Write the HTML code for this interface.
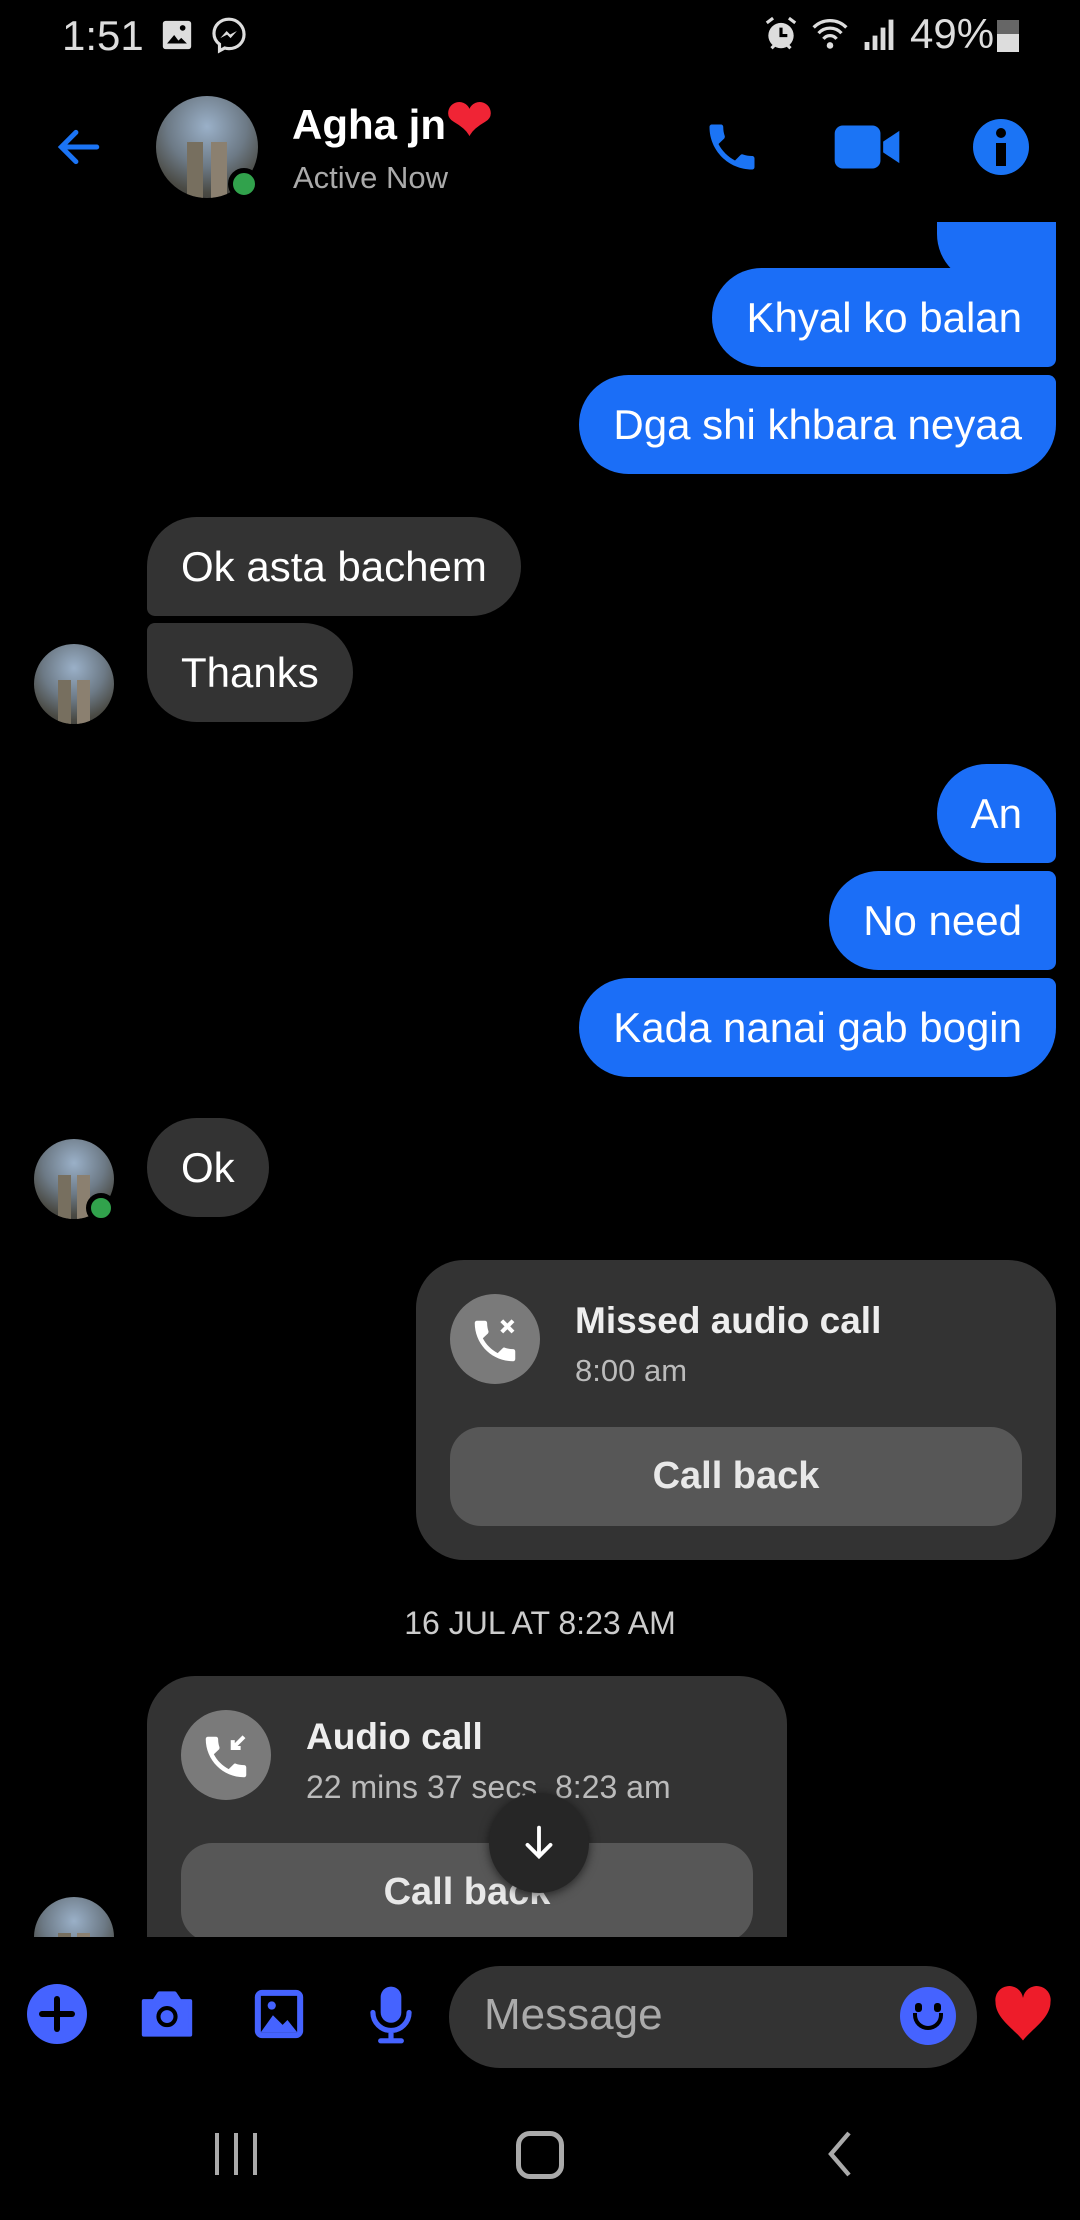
<!DOCTYPE html>
<html><head><meta charset="utf-8"><style>
*{margin:0;padding:0;box-sizing:border-box}
body{width:1080px;height:2220px;background:#000;font-family:"Liberation Sans",sans-serif;color:#fff;position:relative;overflow:hidden}
.a{position:absolute}
.b{position:absolute;height:99px;font-size:42px;line-height:99px;padding:0 34px;white-space:nowrap;letter-spacing:0px}
.me{background:#1b6ef7;right:24px}
.th{background:#333;left:147px}
.av{position:absolute;border-radius:50%;background:radial-gradient(circle at 50% 30%,#9ab0c8 0,#6d7a86 45%,#4a4a44 75%,#333 100%);overflow:hidden}
.av:after{content:"";position:absolute;left:30%;top:45%;width:40%;height:55%;background:linear-gradient(90deg,#776f5f 0 40%,transparent 40% 60%,#8b8070 60%)}
.card{position:absolute;background:#333;border-radius:48px}
.btn{position:absolute;background:#575757;border-radius:31px;text-align:center;font-size:38px;font-weight:bold;color:#e8e8e8}
.ic{position:absolute;width:90px;height:90px;border-radius:50%;background:#7a7a7a}
</style></head><body>
<!-- status bar -->
<div class="a" style="left:62px;top:12px;font-size:42px;color:#ddd">1:51</div>
<svg class="a" style="left:160px;top:18px" width="34" height="34" viewBox="0 0 24 24"><rect x="2" y="2" width="20" height="20" rx="2" fill="#ddd"/><path d="M5 18l5-6 3 4 2-2 4 4z" fill="#000"/><circle cx="16" cy="7" r="2" fill="#000"/></svg>
<svg class="a" style="left:210px;top:16px" width="38" height="38" viewBox="0 0 24 24"><path d="M12 2C6.5 2 2.5 6 2.5 11c0 2.8 1.3 5.2 3.5 6.8V22l3.3-1.8c.9.3 1.8.4 2.7.4 5.5 0 9.5-4 9.5-9S17.5 2 12 2z" fill="none" stroke="#ddd" stroke-width="2"/><path d="M6.5 14l4-4.5 2.2 2.2 4.3-2.2-4 4.5-2.2-2.2z" fill="#ddd"/></svg>
<svg class="a" style="left:762px;top:14px" width="38" height="40" viewBox="0 0 24 24"><circle cx="12" cy="13" r="8" fill="#ddd"/><path d="M12 8v5h4" stroke="#000" stroke-width="2" fill="none"/><path d="M3 5l4-3M21 5l-4-3M6 21l2-2M18 21l-2-2" stroke="#ddd" stroke-width="2"/></svg>
<svg class="a" style="left:810px;top:16px" width="40" height="36" viewBox="0 0 24 22"><path d="M2 7a14 14 0 0 1 20 0M5 10.5a9.5 9.5 0 0 1 14 0M8 14a5 5 0 0 1 8 0" fill="none" stroke="#ddd" stroke-width="2"/><circle cx="12" cy="18" r="2" fill="#ddd"/></svg>
<svg class="a" style="left:862px;top:18px" width="34" height="32" viewBox="0 0 20 20"><rect x="1" y="15" width="3" height="5" fill="#ddd"/><rect x="6" y="11" width="3" height="9" fill="#ddd"/><rect x="11" y="6" width="3" height="14" fill="#ddd"/><rect x="16" y="1" width="3" height="19" fill="#ddd"/></svg>
<div class="a" style="left:910px;top:10px;font-size:42px;color:#ddd">49%</div>
<div class="a" style="left:997px;top:20px;width:22px;height:32px;background:#ddd;border-top:14px solid #666"></div>

<!-- header -->
<svg class="a" style="left:50px;top:122px" width="56" height="50" viewBox="0 0 24 24"><path d="M21 12H4M11 5l-7 7 7 7" fill="none" stroke="#1b74f5" stroke-width="2.4" stroke-linecap="round"/></svg>
<div class="av" style="left:156px;top:96px;width:102px;height:102px"></div>
<div class="a" style="left:228px;top:168px;width:32px;height:32px;border-radius:50%;background:#31a24c;border:5px solid #000"></div>
<div class="a" style="left:292px;top:100px;font-size:42px;font-weight:bold">Agha jn<span style="color:#f02435;font-size:56px;line-height:40px">❤</span></div>
<div class="a" style="left:293px;top:160px;font-size:31px;color:#aaa">Active Now</div>
<svg class="a" style="left:702px;top:117px" width="60" height="60" viewBox="0 0 24 24"><path d="M6.6 10.8c1.4 2.8 3.8 5.1 6.6 6.6l2.2-2.2c.3-.3.7-.4 1-.2 1.1.4 2.3.6 3.6.6.6 0 1 .4 1 1V20c0 .6-.4 1-1 1C10.6 21 3 13.4 3 4c0-.6.4-1 1-1h3.5c.6 0 1 .4 1 1 0 1.3.2 2.5.6 3.6.1.3 0 .7-.2 1z" fill="#1b74f5"/></svg>
<svg class="a" style="left:832px;top:120px" width="70" height="54" viewBox="0 0 26 20"><rect x="1" y="2" width="17" height="16" rx="3" fill="#1b74f5"/><path d="M19 8l6-4v12l-6-4z" fill="#1b74f5"/></svg>
<div class="a" style="left:973px;top:119px;width:56px;height:56px;border-radius:50%;background:#1b74f5"></div>
<div class="a" style="left:996px;top:128px;width:10px;height:10px;border-radius:50%;background:#000"></div>
<div class="a" style="left:996px;top:143px;width:10px;height:23px;background:#000"></div>

<!-- messages -->
<div class="a" style="left:0;top:0;width:1080px;height:1937px;overflow:hidden">
<div class="a" style="left:0;top:222px;width:1080px;height:1715px;overflow:hidden">
<div class="b me" style="top:-60px;width:119px;height:122px;border-radius:0 0 8px 50px"></div>
</div>
<div class="b me" style="top:268px;border-radius:50px 8px 8px 50px">Khyal ko balan</div>
<div class="b me" style="top:375px;border-radius:50px 8px 50px 50px">Dga shi khbara neyaa</div>
<div class="b th" style="top:517px;border-radius:50px 50px 50px 8px">Ok asta bachem</div>
<div class="b th" style="top:623px;border-radius:8px 50px 50px 50px">Thanks</div>
<div class="av" style="left:34px;top:644px;width:80px;height:80px"></div>
<div class="b me" style="top:764px;border-radius:50px 50px 8px 50px">An</div>
<div class="b me" style="top:871px;border-radius:50px 8px 8px 50px">No need</div>
<div class="b me" style="top:978px;border-radius:50px 8px 50px 50px">Kada nanai gab bogin</div>
<div class="b th" style="top:1118px;border-radius:50px">Ok</div>
<div class="av" style="left:34px;top:1139px;width:80px;height:80px"></div>
<div class="a" style="left:86px;top:1193px;width:30px;height:30px;border-radius:50%;background:#31a24c;border:5px solid #000"></div>

<div class="card" style="left:416px;top:1260px;width:640px;height:300px"></div>
<div class="ic" style="left:450px;top:1294px"></div>
<svg class="a" style="left:468px;top:1314px" width="54" height="54" viewBox="0 0 24 24"><path d="M6.6 10.8c1.4 2.8 3.8 5.1 6.6 6.6l2.2-2.2c.3-.3.7-.4 1-.2 1.1.4 2.3.6 3.6.6.6 0 1 .4 1 1V20c0 .6-.4 1-1 1C10.6 21 3 13.4 3 4c0-.6.4-1 1-1h3.5c.6 0 1 .4 1 1 0 1.3.2 2.5.6 3.6.1.3 0 .7-.2 1z" fill="#fff"/><path d="M15 3l5 5M20 3l-5 5" stroke="#fff" stroke-width="1.8"/></svg>
<div class="a" style="left:575px;top:1300px;font-size:37px;font-weight:bold;color:#eee">Missed audio call</div>
<div class="a" style="left:575px;top:1353px;font-size:31px;color:#bbb">8:00 am</div>
<div class="btn" style="left:450px;top:1427px;width:572px;height:99px;line-height:99px">Call back</div>

<div class="a" style="left:0;top:1605px;width:1080px;text-align:center;font-size:32px;color:#ccc">16 JUL AT 8:23 AM</div>

<div class="card" style="left:147px;top:1676px;width:640px;height:320px"></div>
<div class="ic" style="left:181px;top:1710px"></div>
<svg class="a" style="left:199px;top:1730px" width="54" height="54" viewBox="0 0 24 24"><path d="M6.6 10.8c1.4 2.8 3.8 5.1 6.6 6.6l2.2-2.2c.3-.3.7-.4 1-.2 1.1.4 2.3.6 3.6.6.6 0 1 .4 1 1V20c0 .6-.4 1-1 1C10.6 21 3 13.4 3 4c0-.6.4-1 1-1h3.5c.6 0 1 .4 1 1 0 1.3.2 2.5.6 3.6.1.3 0 .7-.2 1z" fill="#fff"/><path d="M20 3l-5 5M15 4.5V8h3.5" stroke="#fff" stroke-width="1.8" fill="none"/></svg>
<div class="a" style="left:306px;top:1716px;font-size:37px;font-weight:bold;color:#eee">Audio call</div>
<div class="a" style="left:306px;top:1769px;font-size:32px;color:#bbb">22 mins 37 secs, 8:23 am</div>
<div class="btn" style="left:181px;top:1843px;width:572px;height:99px;line-height:99px">Call back</div>
<div class="av" style="left:34px;top:1897px;width:80px;height:80px"></div>
<div class="a" style="left:489px;top:1793px;width:100px;height:100px;border-radius:50%;background:#262626;box-shadow:0 2px 10px rgba(0,0,0,.6)"></div>
<svg class="a" style="left:516px;top:1820px" width="46" height="46" viewBox="0 0 24 24"><path d="M12 4v15M6 13l6 6 6-6" fill="none" stroke="#fff" stroke-width="2" stroke-linecap="round"/></svg>
</div>

<!-- bottom bar -->
<div class="a" style="left:27px;top:1984px;width:60px;height:60px;border-radius:50%;background:#4563ff"></div>
<div class="a" style="left:54px;top:1996px;width:6px;height:36px;background:#000;border-radius:3px"></div>
<div class="a" style="left:39px;top:2011px;width:36px;height:6px;background:#000;border-radius:3px"></div>
<svg class="a" style="left:136px;top:1983px" width="62" height="62" viewBox="0 0 24 24"><path d="M3 7h4l2-3h6l2 3h4v13H3z" fill="#4563ff" stroke="#4563ff" stroke-width="1.5" stroke-linejoin="round"/><circle cx="12" cy="13" r="3.3" fill="none" stroke="#000" stroke-width="1.6"/></svg>
<svg class="a" style="left:250px;top:1985px" width="58" height="58" viewBox="0 0 24 24"><rect x="2" y="2" width="20" height="20" rx="3" fill="#4563ff"/><rect x="4.5" y="4.5" width="15" height="15" fill="#000"/><path d="M4.5 19.5l5-7 4 4 2-2 4 5z" fill="#4563ff"/><circle cx="9" cy="8.5" r="1.7" fill="#4563ff"/></svg>
<svg class="a" style="left:365px;top:1984px" width="52" height="62" viewBox="0 0 20 24"><rect x="6" y="1" width="8" height="14" rx="4" fill="#4563ff"/><path d="M3 11a7 7 0 0 0 14 0M10 18v4M6 22h8" fill="none" stroke="#4563ff" stroke-width="2" stroke-linecap="round"/></svg>
<div class="a" style="left:449px;top:1966px;width:528px;height:102px;border-radius:51px;background:#333"></div>
<div class="a" style="left:484px;top:1990px;font-size:44px;color:#aaa">Message</div>
<div class="a" style="left:900px;top:1987px;width:56px;height:58px;border-radius:50%;background:#4563ff"></div>
<div class="a" style="left:915px;top:2003px;width:7px;height:9px;border-radius:3px;background:#000"></div>
<div class="a" style="left:934px;top:2003px;width:7px;height:9px;border-radius:3px;background:#000"></div>
<div class="a" style="left:913px;top:2013px;width:30px;height:17px;border:4px solid #000;border-top:none;border-radius:0 0 15px 15px"></div>
<svg class="a" style="left:990px;top:1980px" width="66" height="66" viewBox="0 0 24 24"><path d="M12 22C9 18 2 14 2 8a5 5 0 0 1 10-1.5A5 5 0 0 1 22 8c0 6-7 10-10 14z" fill="#ee1c2a"/></svg>

<!-- nav -->
<div class="a" style="left:215px;top:2133px;width:4px;height:42px;background:#aaa"></div>
<div class="a" style="left:234px;top:2133px;width:4px;height:42px;background:#aaa"></div>
<div class="a" style="left:253px;top:2133px;width:4px;height:42px;background:#aaa"></div>
<div class="a" style="left:516px;top:2131px;width:48px;height:48px;border:5px solid #aaa;border-radius:14px"></div>
<svg class="a" style="left:825px;top:2131px" width="30" height="46" viewBox="0 0 15 23"><path d="M12 1L3 11.5 12 22" fill="none" stroke="#aaa" stroke-width="2.2"/></svg>
</body></html>
